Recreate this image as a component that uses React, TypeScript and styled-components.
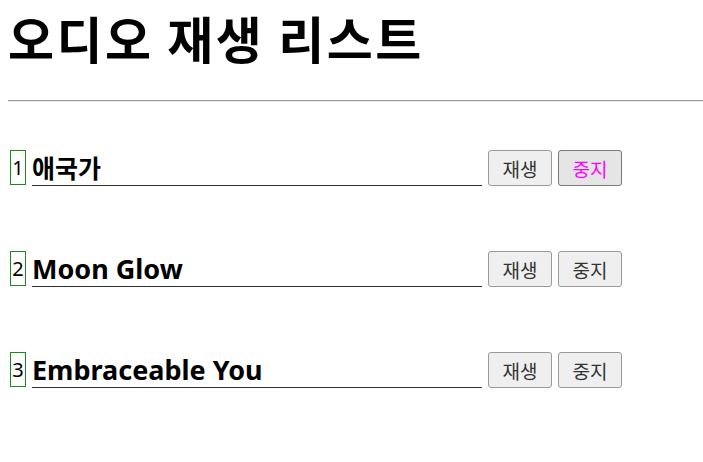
import React from "react";
import styled, { createGlobalStyle } from "styled-components";

const Global = createGlobalStyle`
  html, body { margin: 0; padding: 0; background: #fff; }
  body { font-family: "Noto Sans", "Noto Sans CJK KR", sans-serif; color: #000; }
`;

const Page = styled.div`
  padding: 0 0 0 8px;
`;

const Title = styled.h1`
  margin: 0;
  padding-top: 5px;
  font-family: "Noto Sans CJK KR", sans-serif;
  font-size: 50px;
  font-weight: 700;
  line-height: 64px;
  letter-spacing: 2.5px;
`;

const Rule = styled.hr`
  margin: 31px 0 0 0;
  border: none;
  border-top: 1px solid #9a9a9a;
  border-bottom: 1px solid #eeeeee;
  height: 0;
`;

const List = styled.div`
  display: flex;
  flex-direction: column;
  gap: 65px;
  padding: 48px 0 0 2px;
`;

const Row = styled.div`
  display: flex;
  align-items: flex-end;
  height: 36px;
`;

const Num = styled.span`
  box-sizing: border-box;
  width: 16px;
  height: 35px;
  border: 1px solid #1a8a1a;
  font-family: "Noto Sans", sans-serif;
  font-size: 20px;
  line-height: 33px;
  text-align: center;
  margin-right: 6px;
  align-self: flex-start;
`;

const SongTitle = styled.span<{ $latin?: boolean }>`
  box-sizing: border-box;
  width: 450px;
  height: 36px;
  font-family: "Noto Sans", "Noto Sans CJK KR", sans-serif;
  font-size: ${(p) => (p.$latin ? "27px" : "25px")};
  font-weight: 700;
  line-height: 36px;
  border-bottom: 1px solid #333;
  margin-right: 6px;
`;

const Button = styled.button<{ $active?: boolean }>`
  box-sizing: border-box;
  width: 64px;
  height: 36px;
  margin-right: 6px;
  padding: 0;
  font-family: "Noto Sans CJK KR", sans-serif;
  font-size: 19px;
  border: 1px solid ${(p) => (p.$active ? "#7a7a7a" : "#9a9a9a")};
  border-radius: 3px;
  background: ${(p) => (p.$active ? "#e5e5e5" : "#efefef")};
  color: ${(p) => (p.$active ? "#ff00ff" : "#333")};
  align-self: flex-start;
`;

const songs = ["애국가", "Moon Glow", "Embraceable You"];

export default function App() {
  return (
    <Page>
      <Global />
      <Title>오디오 재생 리스트</Title>
      <Rule />
      <List>
        {songs.map((s, i) => (
          <Row key={s}>
            <Num>{i + 1}</Num>
            <SongTitle $latin={/^[A-Za-z]/.test(s)}>{s}</SongTitle>
            <Button>재생</Button>
            <Button $active={i === 0}>중지</Button>
          </Row>
        ))}
      </List>
    </Page>
  );
}
